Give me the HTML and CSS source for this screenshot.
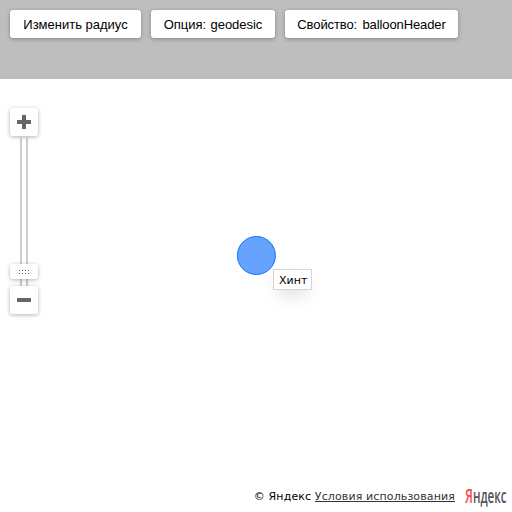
FILE: index.html
```html
<!DOCTYPE html>
<html lang="ru">
<head>
<meta charset="utf-8">
<title>Круг на карте</title>
<link rel="stylesheet" href="styles.css">
</head>
<body>
<header class="toolbar">
  <button class="btn btn-radius">Изменить радиус</button>
  <button class="btn btn-option">Опция: geodesic</button>
  <button class="btn btn-property">Свойство: balloonHeader</button>
</header>
<main class="map">
  <svg class="circle" width="42" height="42" viewBox="0 0 42 42"><circle cx="21.4" cy="21.5" r="19" fill="#66a3ff" stroke="#1070ff"/></svg>
  <div class="hint">Хинт</div>
  <div class="zoom">
    <button class="zoom-btn" aria-label="+"><svg width="14" height="14" shape-rendering="crispEdges"><path d="M5 0h4v5h5v4H9v5H5V9H0V5h5z" fill="#666"/></svg></button>
    <div class="rail">
      <div class="handle"><svg width="10" height="4" shape-rendering="crispEdges"><path d="M0 0h1v1H0zM3 0h1v1H3zM6 0h1v1H6zM9 0h1v1H9zM0 3h1v1H0zM3 3h1v1H3zM6 3h1v1H6zM9 3h1v1H9z" fill="#555"/></svg></div>
    </div>
    <button class="zoom-btn" aria-label="−"><svg width="14" height="4"><path d="M0 0h14v4H0z" fill="#666"/></svg></button>
  </div>
  <footer class="copyright">
    <span class="terms">© Яндекс <a class="link">Условия использования</a></span>
    <span class="logo"><span class="logo-text"><span class="logo-red">Я</span>ндекс</span></span>
  </footer>
</main>
</body>
</html>
```
FILE: styles.css
```css
* { box-sizing: border-box; }
body {
  margin: 0;
  height: 512px;
  overflow: hidden;
  display: flex;
  flex-direction: column;
  background: #fff;
  font-family: "DejaVu Sans", sans-serif;
  color: #000;
}
.toolbar {
  height: 79px;
  flex: none;
  display: flex;
  align-items: flex-start;
  gap: 10px;
  padding: 10px;
  background: #bebebe;
}
.btn {
  height: 28px;
  padding: 1px 0 0;
  border: 0;
  border-radius: 3px;
  background: #fff;
  box-shadow: 0 1px 4px rgba(0, 0, 0, .3);
  font: 13px/28px "Liberation Sans", sans-serif;
  color: #000;
  white-space: nowrap;
}
.btn-radius { width: 131px; }
.btn-option { width: 124px; letter-spacing: -.05px; word-spacing: 1px; }
.btn-property { width: 173px; letter-spacing: -.1px; word-spacing: 1.8px; }
.map {
  position: relative;
  flex: 1;
  display: flex;
  flex-direction: column;
  justify-content: space-between;
}
.zoom {
  width: 28px;
  margin: 29px 0 0 10px;
  display: flex;
  flex-direction: column;
  align-items: center;
}
.zoom-btn {
  width: 28px;
  height: 28px;
  padding: 0;
  border: 0;
  border-radius: 3px;
  background: #fff;
  box-shadow: 0 1px 4px rgba(0, 0, 0, .3);
  display: flex;
  align-items: center;
  justify-content: center;
}
.rail {
  width: 8px;
  height: 150px;
  border: solid #ccc;
  border-width: 0 2px;
  display: flex;
  flex-direction: column;
  justify-content: flex-end;
  align-items: center;
  padding-bottom: 7px;
}
.handle {
  width: 28px;
  height: 15px;
  flex: none;
  display: flex;
  align-items: flex-start;
  justify-content: center;
  padding-top: 6px;
  border-radius: 3px;
  background: #fff;
  box-shadow: 0 1px 4px rgba(0, 0, 0, .3);
}
.circle {
  position: absolute;
  left: 235px;
  top: 155px;
}
.hint {
  position: absolute;
  left: 273px;
  top: 190px;
  width: 39px;
  height: 21px;
  padding: 1px 0 0 5px;
  border: 1px solid #d5d5d5;
  background: #fff;
  box-shadow: 0 8px 18px -6px rgba(0, 0, 0, .25);
  font-size: 11px;
  line-height: 20px;
}
.copyright {
  display: flex;
  justify-content: flex-end;
  align-items: center;
  height: 20px;
  margin-bottom: 5px;
  padding-right: 5px;
  font-size: 11px;
  line-height: 20px;
  letter-spacing: .12px;
  white-space: nowrap;
}
.link {
  color: #333;
  text-decoration: underline;
}
.logo {
  display: flex;
  width: 42px;
  height: 20px;
  margin-left: 10px;
}
.logo-text {
  display: block;
  font: 600 19px/18px "Open Sans", sans-serif;
  letter-spacing: 0;
  color: #555;
  transform: scaleX(.61);
  transform-origin: left center;
}
.logo-red {
  font-size: 20px;
  font-weight: 600;
  line-height: 1px;
  color: #ff4a4a;
}
```
